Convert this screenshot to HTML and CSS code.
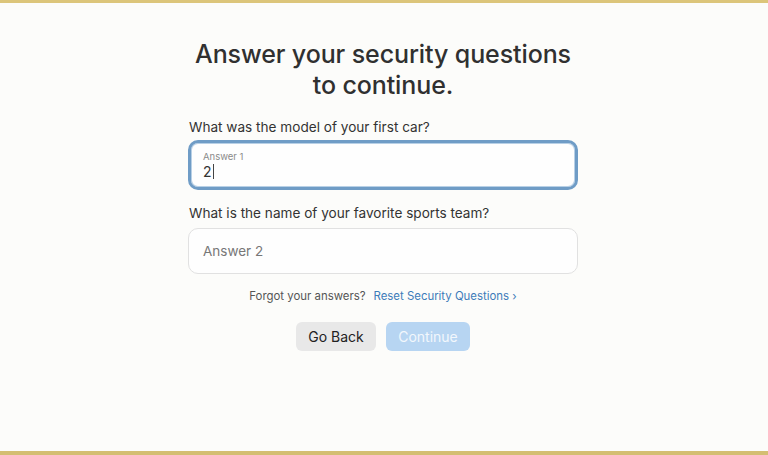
FILE: index.html
```html
<!DOCTYPE html>
<html>
<head>
<meta charset="utf-8">
<link rel="stylesheet" href="styles.css">
</head>
<body>
<div class="frame">
  <main class="card">
    <h1 class="title">Answer your security questions<br>to continue.</h1>
    <div class="field">
      <label class="question">What was the model of your first car?</label>
      <div class="input focused">
        <span class="float-label">Answer 1</span>
        <span class="value">2<span class="caret"></span></span>
      </div>
    </div>
    <div class="field">
      <label class="question">What is the name of your favorite sports team?</label>
      <div class="input">
        <span class="placeholder">Answer 2</span>
      </div>
    </div>
    <p class="forgot">Forgot your answers?<a class="link">Reset Security Questions ›</a></p>
    <div class="actions">
      <button class="btn secondary">Go Back</button>
      <button class="btn primary">Continue</button>
    </div>
  </main>
</div>
</body>
</html>
```

FILE: styles.css
```css
* { box-sizing: border-box; }
html, body { margin: 0; padding: 0; }
body {
  width: 768px;
  height: 455px;
  background: #fcfcfa;
  font-family: Inter, "Liberation Sans", sans-serif;
  color: #333;
  overflow: hidden;
}
.frame {
  height: 455px;
  border-top: 3px solid #dcc57a;
  border-bottom: 4px solid #d4be72;
  display: flex;
  justify-content: center;
}
.card {
  width: 390px;
  margin-right: 2px;
  padding-top: 36px;
  display: flex;
  flex-direction: column;
}
.title {
  margin: 0 -20px;
  text-align: center;
  font-size: 25px;
  line-height: 31px;
  font-weight: 500;
  color: #303030;
  letter-spacing: -0.1px;
}
.field { display: flex; flex-direction: column; }
.question {
  font-size: 13.6px;
  line-height: 18px;
  color: #333;
  padding-left: 1px;
}
.field:nth-of-type(1) .question { margin-top: 17px; margin-bottom: 4px; }
.field:nth-of-type(2) .question { margin-top: 14px; margin-bottom: 6px; }
.input {
  position: relative;
  height: 46px;
  border: 1px solid #e1e1e1;
  border-radius: 10px;
  background: #fefefe;
  padding: 0 14px;
  display: flex;
  flex-direction: column;
  justify-content: center;
}
.input.focused {
  height: 50px;
  border: 3px solid #6f9cc6;
  box-shadow: inset 0 0 0 1px #b8d0e6;
  padding: 0 12px;
}
.float-label {
  font-size: 9.5px;
  color: #8a8a8a;
  line-height: 12px;
  margin-top: 1px;
}
.value {
  font-size: 14px;
  line-height: 18px;
  color: #333;
  display: flex;
  align-items: center;
}
.caret {
  display: inline-block;
  width: 1px;
  height: 15px;
  background: #444;
  margin-left: 1px;
}
.placeholder {
  font-size: 13.5px;
  color: #777;
}
.forgot {
  margin: 14px 0 0;
  text-align: center;
  font-size: 11.4px;
  line-height: 16px;
  color: #555;
}
.link { color: #3d7bb9; margin-left: 8px; }
.actions {
  margin-top: 18px;
  display: flex;
  justify-content: center;
  gap: 10px;
}
.btn {
  font-family: inherit;
  border: none;
  border-radius: 6px;
  height: 29px;
  font-size: 14px;
  padding: 0;
}
.secondary { width: 80px; background: #e8e8e8; color: #222; }
.primary { width: 84px; background: #b7d5f2; color: #f2f7fc; }
```
